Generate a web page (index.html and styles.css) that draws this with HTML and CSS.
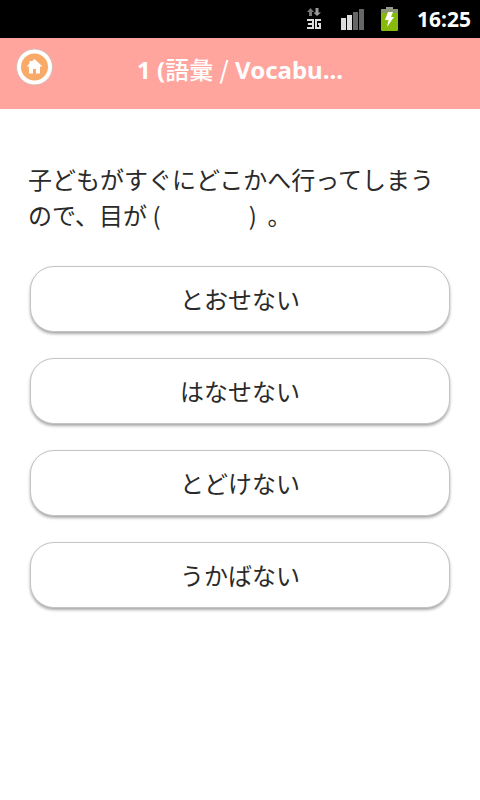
FILE: index.html
```html
<!DOCTYPE html>
<html lang="ja">
<head>
<meta charset="utf-8">
<meta name="viewport" content="width=device-width, initial-scale=1">
<title>1 (語彙 / Vocabulary)</title>
<link rel="stylesheet" href="styles.css">
</head>
<body>
<div class="status">
  <svg class="net" width="16" height="24" viewBox="0 0 16 24" aria-hidden="true">
    <path d="M4.500 1 8 5H6V9H3V5H1z" fill="#777"/>
    <path d="M11 9 7.500 5.500H9.500V1H12.500V5.500H15z" fill="#999"/>
    <path d="M1 13H7V21H1M2 17H7M15 13H10V21H14V17H12" fill="none" stroke="#ddd" stroke-width="2"/>
  </svg>
  <svg class="signal" width="24" height="22" viewBox="0 0 24 22" aria-hidden="true">
    <path d="M0 10H5V22H0zM6 7H11V22H6z" fill="#ddd"/>
    <path d="M12 4H17V22H12zM18 1H23V22H18z" fill="#666"/>
  </svg>
  <svg class="battery" width="18" height="24" viewBox="0 0 18 24" aria-hidden="true">
    <path d="M5 0H12V3H5z" fill="#999"/>
    <rect x="0" y="2" width="17" height="22" rx="1" fill="#87b80c"/>
    <path d="M0 2H17V6H0z" fill="#8b9672"/>
    <path d="M7 5H12L10 10H13L6 20 7.500 13H4z" fill="#fff"/>
  </svg>
  <time class="clock">16:25</time>
</div>
<header class="bar">
  <a class="home" href="#" aria-label="Home">
    <svg width="38" height="38" viewBox="0 0 38 38" aria-hidden="true">
      <circle cx="18.500" cy="19" r="18" fill="#fff" stroke="#d8b8b4"/>
      <circle cx="18.500" cy="19" r="13.500" fill="#f9aa68"/>
      <path d="M18.500 11 26.500 18.500H24V25.500H20V21H17V25.500H13V18.500H10.500L13.500 15.500V13H15.500V13.700z" fill="#fff"/>
    </svg>
  </a>
  <h1 class="title">1 (<span class="kanji">語彙</span> <span class="kanji">/</span> Vocabu...</h1>
</header>
<main class="quiz">
  <p class="question">子どもがすぐにどこかへ行ってしまうので、目が&nbsp;(　　　&nbsp;&nbsp;&nbsp;)&nbsp;&nbsp;。</p>
  <div class="answers">
    <button class="answer" type="button">とおせない</button>
    <button class="answer" type="button">はなせない</button>
    <button class="answer" type="button">とどけない</button>
    <button class="answer" type="button">うかばない</button>
  </div>
</main>
</body>
</html>
```
FILE: styles.css
```css
* {
  box-sizing: border-box;
}

body {
  margin: 0;
  background: #fff;
  color: #2a2a2a;
  font-family: "Noto Sans", "Noto Sans CJK JP", sans-serif;
}

.status {
  display: flex;
  align-items: center;
  justify-content: flex-end;
  height: 38px;
  padding-right: 9px;
  background: #000;
  color: #fff;
}

.signal {
  margin-left: 19px;
}

.battery {
  margin: 0 18px 0 16px;
}

.clock {
  font-size: 21px;
  font-weight: 700;
  line-height: 38px;
}

.bar {
  display: grid;
  grid-template-columns: 38px 1fr 38px;
  align-items: center;
  padding: 10px 16px 23px;
  background: #ffa59e;
}

.home svg {
  display: block;
}

.title {
  margin: 0;
  padding-top: 6px;
  color: #fff;
  font-size: 24px;
  font-weight: 700;
  line-height: 32px;
  text-align: center;
  white-space: nowrap;
}

.kanji {
  font-family: "Noto Sans CJK JP", sans-serif;
  font-weight: 500;
  line-height: 1;
}

.quiz {
  padding: 52px 28px 24px;
}

.question {
  margin: 0;
  font-family: "Noto Sans CJK JP", sans-serif;
  font-size: 24px;
  line-height: 36px;
}

.answers {
  display: grid;
  gap: 26px;
  margin: 33px 2px 0;
}

.answer {
  height: 66px;
  padding: 0;
  border: 1px solid #c4c4c4;
  border-radius: 24px;
  background: #fff;
  box-shadow: 0 2px 3px #aaa;
  color: #2a2a2a;
  font-family: "Noto Sans CJK JP", sans-serif;
  font-size: 24px;
  line-height: 36px;
}
```
